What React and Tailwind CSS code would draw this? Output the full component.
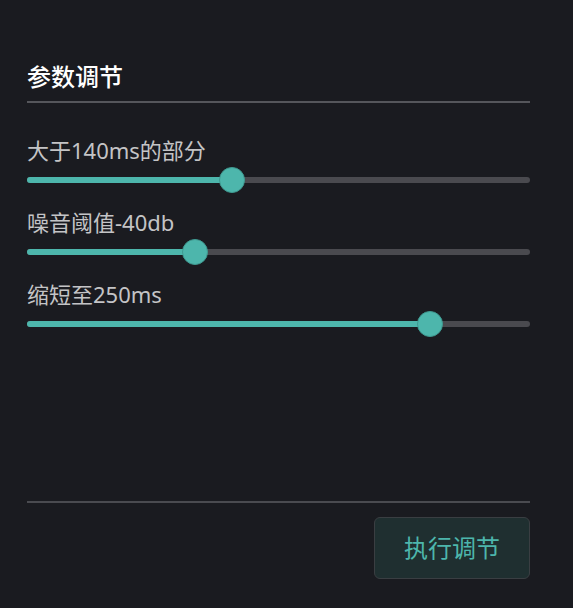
import React from "react";

const sliders = [
  { label: "大于140ms的部分", value: 40.8 },
  { label: "噪音阈值-40db", value: 33.4 },
  { label: "缩短至250ms", value: 80.1 },
];

export default function App() {
  return (
    <div
      className="w-full h-[608px] bg-[#1a1b20] pl-[27px] pr-[43px] flex flex-col"
      style={{ fontFamily: '"Noto Sans", "Noto Sans CJK SC", sans-serif' }}
    >
      {/* 标题 */}
      <div className="pt-[61px] pb-[8px] border-b-2 border-[#55565b]">
        <h2 className="text-[24px] leading-[32px] font-medium text-white">参数调节</h2>
      </div>

      <div className="mt-[33px] flex flex-col gap-[15px]">
        {sliders.map((s) => (
          <Slider key={s.label} label={s.label} value={s.value} />
        ))}
      </div>

      <div className="flex-1" />

      <div className="border-t-2 border-[#4a4b50] pt-[14px] pb-[29px] flex justify-end">
        <button className="w-[156px] h-[62px] rounded-[6px] bg-[#1f2f30] border border-[#3a3e42] text-[#4db6ac] text-[24px]">
          执行调节
        </button>
      </div>
    </div>
  );
}

function Slider({ label, value }) {
  return (
    <div>
      <div className="text-[22px] leading-[28px] text-[#c4c4c6]">{label}</div>
      <div className="mt-[3px] h-[26px] relative flex items-center">
        <div className="w-full h-[6px] rounded-full bg-[#4a4a4f]">
          <div
            className="h-full rounded-full bg-[#4db6ac]"
            style={{ width: `${value}%` }}
          />
        </div>
        <div
          className="absolute top-0 w-[26px] h-[26px] -ml-[13px] rounded-full bg-[#4db6ac] border border-[#3f9a91]"
          style={{ left: `${value}%` }}
        />
      </div>
    </div>
  );
}
